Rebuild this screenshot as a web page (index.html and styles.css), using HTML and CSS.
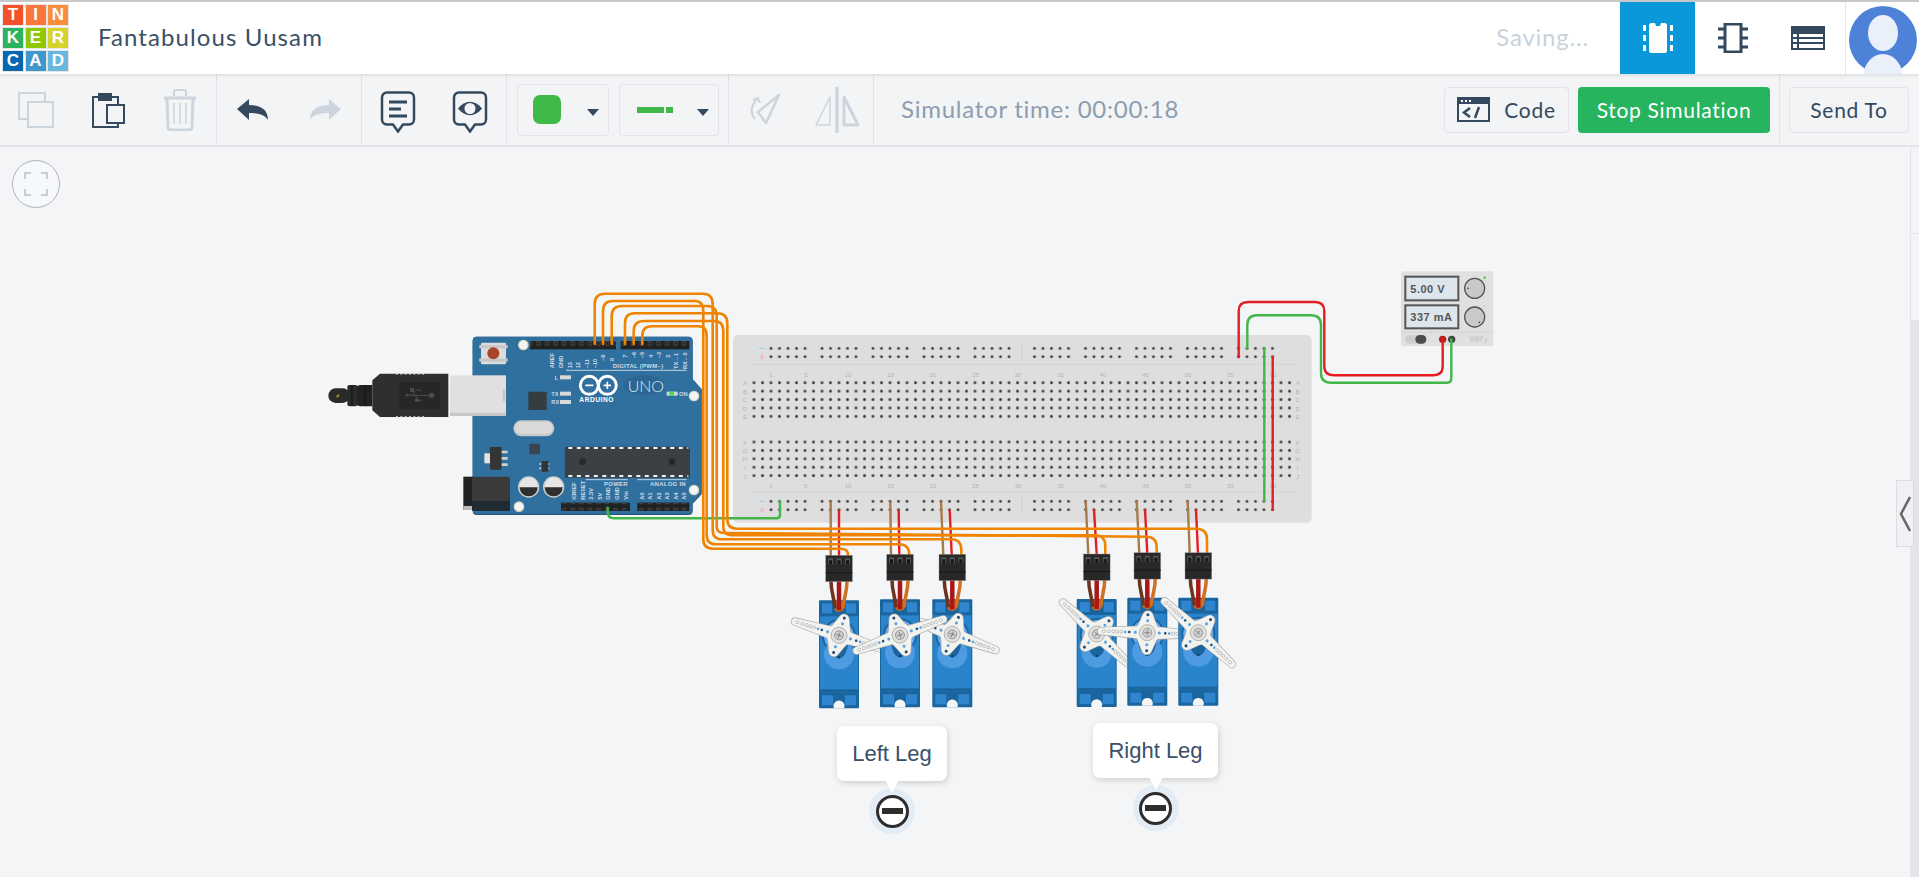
FILE: index.html
```html
<!DOCTYPE html>
<html lang="en">
<head>
  <meta charset="UTF-8" />
  <title>Fantabulous Uusam - Tinkercad</title>
  <link rel="stylesheet" href="styles.css">
</head>
<body>

  <header class="topbar">
    <div class="logo">
      <span class="c1">T</span><span class="c2">I</span><span class="c3">N</span>
      <span class="c4">K</span><span class="c5">E</span><span class="c6">R</span>
      <span class="c7">C</span><span class="c8">A</span><span class="c9">D</span>
    </div>
    <div class="title">Fantabulous Uusam</div>
    <div class="saving">Saving...</div>
    <nav class="tabs">
      <a class="tab active">
        <svg width="30" height="30" viewBox="0 0 30 30">
          <rect x="6" y="0" width="18" height="30" rx="2.5" fill="#fff"/>
          <path d="M12 0h6l-1 3h-4z" fill="#0b98da"/>
          <path d="M1.5 2v6M1.5 12v6M1.5 22v6M28.5 2v6M28.5 12v6M28.5 22v6" stroke="#fff" stroke-width="3"/>
        </svg>
      </a>
      <a class="tab">
        <svg width="30" height="30" viewBox="0 0 30 30">
          <rect x="7" y="1" width="16" height="28" fill="none" stroke="#34495e" stroke-width="3"/>
          <path d="M0 6h6M0 15h6M0 24h6M24 6h6M24 15h6M24 24h6" stroke="#34495e" stroke-width="3"/>
        </svg>
      </a>
      <a class="tab">
        <svg width="34" height="24" viewBox="0 0 34 24">
          <rect width="34" height="24" fill="#34495e"/>
          <path d="M8 8h24v3H8zM2 8h4v3H2zM2 13h4v3H2zM8 13h24v3H8zM2 18h4v4H2zM8 18h24v4H8z" fill="#fff"/>
        </svg>
      </a>
    </nav>
    <div class="avatar">
      <svg width="68" height="68" viewBox="0 0 68 68">
        <circle cx="34" cy="34" r="34" fill="#4d82d8"/>
        <ellipse cx="34" cy="27" rx="15" ry="18" fill="#e9f0fa"/>
        <ellipse cx="34" cy="72" rx="20" ry="24" fill="#e9f0fa"/>
      </svg>
    </div>
  </header>

  <div class="toolbar">
    <div class="group">
      <button class="tool">
        <svg width="36" height="36" viewBox="0 0 36 36" fill="none" stroke="#ccd5de" stroke-width="2">
          <rect x="1" y="1" width="26" height="26"/>
          <rect x="10" y="10" width="25" height="25" fill="#f3f4f6"/>
        </svg>
      </button>
      <button class="tool">
        <svg width="33" height="36" viewBox="0 0 33 36" fill="none" stroke="#34495e" stroke-width="2">
          <rect x="1" y="5" width="25" height="30"/>
          <rect x="7" y="2" width="12" height="6" fill="#34495e"/>
          <rect x="15" y="13" width="17" height="18" fill="#f3f4f6"/>
        </svg>
      </button>
      <button class="tool">
        <svg width="32" height="42" viewBox="0 0 32 42" fill="none" stroke="#ccd5de">
          <path d="M0 9h32" stroke-width="3"/>
          <path d="M10 7V3a2 2 0 0 1 2-2h8a2 2 0 0 1 2 2v4" stroke-width="2"/>
          <path d="M3 10l1 28a3 3 0 0 0 3 3h18a3 3 0 0 0 3-3l1-28" stroke-width="3"/>
          <path d="M10 14v21M16 14v21M22 14v21" stroke-width="1.5"/>
        </svg>
      </button>
    </div>
    <div class="group">
      <button class="tool">
        <svg width="32" height="21" viewBox="0 0 32 21"><path d="M0 10L12 0v6c12 0 19 5 19 15-3-5-9-7-19-7v7z" fill="#34495e"/></svg>
      </button>
      <button class="tool">
        <svg width="32" height="21" viewBox="0 0 32 21"><path d="M32 10L20 0v6C8 6 1 11 1 21c3-5 9-7 19-7v7z" fill="#ccd5de"/></svg>
      </button>
    </div>
    <div class="group">
      <button class="tool tool-low">
        <svg width="36" height="42" viewBox="0 0 36 42" fill="none" stroke="#34495e" stroke-width="2.5">
          <path d="M7 1.500h22a5 5 0 0 1 5 5v22a5 5 0 0 1-5 5h-6l-5 7-5-7H7a5 5 0 0 1-5-5v-22a5 5 0 0 1 5-5z"/>
          <path d="M9 11h18M9 18h12M9 25h18" stroke-width="3"/>
        </svg>
      </button>
      <button class="tool tool-low">
        <svg width="36" height="42" viewBox="0 0 36 42" fill="none" stroke="#34495e" stroke-width="2.5">
          <path d="M7 1.500h22a5 5 0 0 1 5 5v22a5 5 0 0 1-5 5h-6l-5 7-5-7H7a5 5 0 0 1-5-5v-22a5 5 0 0 1 5-5z"/>
          <path d="M6 17.500c7-9 17-9 24 0-7 9-17 9-24 0z" fill="#34495e" stroke="none"/>
          <circle cx="18" cy="17.500" r="5.500" fill="#f3f4f6" stroke="none"/>
        </svg>
      </button>
    </div>
    <div class="group pickers">
      <button class="picker picker-color">
        <span class="swatch"></span>
        <span class="caret"></span>
      </button>
      <button class="picker picker-line">
        <span class="line-long"></span><span class="line-short"></span>
        <span class="caret"></span>
      </button>
    </div>
    <div class="group">
      <button class="tool">
        <svg width="31" height="31" viewBox="0 0 31 31" fill="none" stroke="#ccd5de" stroke-width="2.500" stroke-linejoin="round">
          <path d="M29 1L8 18l8 11z"/>
          <path d="M5 25C0 19 1 12 7 5" stroke-width="2"/>
          <path d="M3 6l5-2 2 5" stroke-width="2"/>
        </svg>
      </button>
      <button class="tool">
        <svg width="46" height="46" viewBox="0 0 46 46" fill="none" stroke="#ccd5de" stroke-linejoin="round">
          <path d="M23 1v44" stroke-width="3.500" stroke-linecap="round"/>
          <path d="M16 10v28H2z" stroke-width="1.500"/>
          <path d="M30 10v28h14z" stroke-width="3"/>
        </svg>
      </button>
    </div>
    <div class="sim-time">Simulator time: 00:00:18</div>
    <div class="actions">
      <button class="btn btn-code">
        <svg width="33" height="25" viewBox="0 0 33 25">
          <rect x="1" y="1" width="31" height="23" fill="none" stroke="#34495e" stroke-width="2"/>
          <rect x="1" y="1" width="31" height="6" fill="#34495e"/>
          <path d="M4 4h2M8 4h2M12 4h2" stroke="#fff" stroke-width="2"/>
          <path d="M13 11l-6 4.500 6 4.500M22 10l-4 11" fill="none" stroke="#34495e" stroke-width="2.500"/>
        </svg>
        Code
      </button>
      <button class="btn btn-stop">Stop Simulation</button>
      <span class="divider"></span>
      <button class="btn btn-send">Send To</button>
    </div>
  </div>

  <div class="workspace">
    <main class="stage">
      <button class="fit">
        <svg width="24" height="24" viewBox="0 0 24 24" fill="none" stroke="#b9bec4" stroke-width="1.500">
          <path d="M1 7V1h6M17 1h6v6M23 17v6h-6M7 23H1v-6"/>
        </svg>
      </button>

      <svg class="circuit" width="1910" height="731" viewBox="0 146 1910 731">
        <defs>
          <pattern id="holes" x="749.750" y="377.500" width="8.500" height="8.400" patternUnits="userSpaceOnUse">
            <circle cx="4.250" cy="4.200" r="2.100" fill="#cfcfcf"/>
            <circle cx="4.250" cy="4.200" r="1.400" fill="#3c3c3c"/>
          </pattern>
          <pattern id="holes2" x="749.750" y="436.800" width="8.500" height="8.400" patternUnits="userSpaceOnUse">
            <circle cx="4.250" cy="4.200" r="2.100" fill="#cfcfcf"/>
            <circle cx="4.250" cy="4.200" r="1.400" fill="#3c3c3c"/>
          </pattern>
          <pattern id="rail" x="766.750" y="343.100" width="51" height="8.400" patternUnits="userSpaceOnUse">
            <g fill="#3c3c3c">
              <circle cx="4.250" cy="4.200" r="1.400"/><circle cx="12.750" cy="4.200" r="1.400"/><circle cx="21.250" cy="4.200" r="1.400"/><circle cx="29.750" cy="4.200" r="1.400"/><circle cx="38.250" cy="4.200" r="1.400"/>
            </g>
          </pattern>
          <pattern id="rail2" x="1030.250" y="343.100" width="51" height="8.400" patternUnits="userSpaceOnUse">
            <g fill="#3c3c3c">
              <circle cx="4.250" cy="4.200" r="1.400"/><circle cx="12.750" cy="4.200" r="1.400"/><circle cx="21.250" cy="4.200" r="1.400"/><circle cx="29.750" cy="4.200" r="1.400"/><circle cx="38.250" cy="4.200" r="1.400"/>
            </g>
          </pattern>
          <pattern id="pins" x="0" y="0" width="25.700" height="25" patternUnits="userSpaceOnUse">
            <rect x="7" y="6" width="12" height="13" fill="#4b4b4b"/>
            <rect x="10" y="9" width="6" height="7" fill="#1c1c1c"/>
          </pattern>

          <g id="bbnums" class="bb-label" text-anchor="middle">
            <text x="771">1</text><text x="805.700">5</text><text x="848">10</text><text x="890.500">15</text><text x="933">20</text><text x="975.500">25</text><text x="1018">30</text><text x="1060.500">35</text><text x="1103">40</text><text x="1145.500">45</text><text x="1188">50</text><text x="1230.700">55</text><text x="1273">60</text>
          </g>
          <g id="bbletters" class="bb-label" text-anchor="middle">
            <text y="384">A</text><text y="392.500">B</text><text y="401">C</text><text y="409.500">D</text><text y="418">E</text>
            <text y="443.500">F</text><text y="452">G</text><text y="460.300">H</text><text y="469">I</text><text y="477.500">J</text>
          </g>

          <g id="servo">
            <path d="M1 0h38a1 1 0 0 1 1 1v106a1 1 0 0 1-1 1H1a1 1 0 0 1-1-1V1a1 1 0 0 1 1-1z" fill="#1b659f"/>
            <rect x="1" y="16" width="38" height="76" fill="#2a84cc"/>
            <rect x="3" y="3" width="10" height="10" fill="#2f86cf"/>
            <rect x="27" y="3" width="10" height="10" fill="#2f86cf"/>
            <rect x="3" y="95" width="11" height="10" fill="#2f86cf"/>
            <rect x="26" y="95" width="11" height="10" fill="#2f86cf"/>
            <path d="M4 20h32v8L36 20z" fill="#1b659f"/>
            <circle cx="20" cy="36" r="17" fill="#1b659f"/>
            <circle cx="20" cy="36" r="15" fill="#66aef0"/>
            <circle cx="20" cy="54" r="15" fill="#4f9be2"/>
            <path d="M11 42a9 16 0 0 0 18 0z" fill="#1b659f"/>
            <circle cx="20" cy="57" r="1.200" fill="#0e3f66"/>
            <rect x="1" y="89" width="38" height="3" fill="#1b659f"/>
            <path d="M15 108a5.500 5.500 0 1 1 10 0z" fill="#f4f5f7"/>
            <circle cx="20" cy="6" r="5.500" fill="#c96d1e"/>
          </g>

          <g id="lead">
            <path d="M12 -19C12 -8 15 -4 16 8" fill="none" stroke="#6b3420" stroke-width="3.500"/>
            <path d="M28 -19C28 -8 25 -4 24 8" fill="none" stroke="#d07022" stroke-width="3.500"/>
            <path d="M20 -19V10" stroke="#aa1717" stroke-width="4.500"/>
            <rect x="6.700" y="-45" width="26.700" height="26.400" fill="#282828" stroke="#9a9a9a" stroke-width=".4"/>
            <rect x="6.700" y="-28" width="26.700" height="1" fill="#161616"/>
            <g fill="#555">
              <rect x="9" y="-42" width="5" height="6"/><rect x="17.500" y="-42" width="5" height="6"/><rect x="26" y="-42" width="5" height="6"/>
            </g>
            <g fill="#161616">
              <rect x="10" y="-40" width="3" height="4"/><rect x="18.500" y="-40" width="3" height="4"/><rect x="27" y="-40" width="3" height="4"/>
            </g>
          </g>

          <g id="arm">
            <g fill="#a6a6a6" stroke="#a6a6a6" stroke-width="1.200" stroke-linejoin="round">
              <path d="M-46 -3.500L-10 -6H10L46 -3.500A3.500 3.500 0 0 1 46 3.500L10 6H-10L-46 3.500A3.500 3.500 0 0 1 -46 -3.500Z"/>
              <path d="M-4.500 -19A5 5 0 0 1 4.500 -19L9 -8V8L4.500 19A5 5 0 0 1 -4.500 19L-9 8V-8Z"/>
              <circle r="12"/>
            </g>
            <g fill="#f2f2ef">
              <path d="M-46 -3.500L-10 -6H10L46 -3.500A3.500 3.500 0 0 1 46 3.500L10 6H-10L-46 3.500A3.500 3.500 0 0 1 -46 -3.500Z"/>
              <path d="M-4.500 -19A5 5 0 0 1 4.500 -19L9 -8V8L4.500 19A5 5 0 0 1 -4.500 19L-9 8V-8Z"/>
              <circle r="12"/>
            </g>
            <g fill="#5c9fdc">
              <circle cx="-12" r="1.500"/><circle cx="12" r="1.500"/><circle cx="-22" r="1.300"/><circle cx="22" r="1.300"/><circle cy="-12" r="1.500"/><circle cy="12" r="1.500"/>
            </g>
            <g fill="#234a72">
              <circle cx="-18" r="1.300"/><circle cx="18" r="1.300"/><circle cy="-18" r="1.500"/><circle cy="18" r="1.500"/>
            </g>
            <g fill="#f8f8f8" stroke="#9c9c9c" stroke-width=".6">
              <circle cx="-26" r="1.500"/><circle cx="-30" r="1.500"/><circle cx="-34" r="1.500"/><circle cx="-38.500" r="1.500"/><circle cx="-43.500" r="1.500"/>
              <circle cx="26" r="1.500"/><circle cx="30" r="1.500"/><circle cx="34" r="1.500"/><circle cx="38.500" r="1.500"/><circle cx="43.500" r="1.500"/>
            </g>
            <circle r="8" fill="#e2e2e0" stroke="#a8a8a8" stroke-width=".8"/>
            <circle r="4.500" fill="#d0d0d0" stroke="#8c8c8c" stroke-width=".8"/>
            <path d="M-3 0H3M0 -3V3" stroke="#777" stroke-width=".8"/>
          </g>
        </defs>

        <!-- breadboard -->
        <rect x="733" y="334" width="578.700" height="187.700" rx="5" fill="#dedede"/>
        <path d="M748 363.500H1297M748 490.700H1297" stroke="#d5d5d5"/>
        <path d="M1022 343V360M1022 493V510" stroke="#d0d0d0"/>
        <rect x="749.750" y="377.500" width="544" height="42" fill="url(#holes)"/>
        <rect x="749.750" y="436.800" width="544" height="42" fill="url(#holes2)"/>
        <rect x="766.750" y="343.100" width="250" height="16.800" fill="url(#rail)"/>
        <rect x="1030.250" y="343.100" width="250" height="16.800" fill="url(#rail2)"/>
        <g transform="translate(0 153)">
          <rect x="766.750" y="343.100" width="250" height="16.800" fill="url(#rail)"/>
          <rect x="1030.250" y="343.100" width="250" height="16.800" fill="url(#rail2)"/>
        </g>
        <use href="#bbnums" y="375.500"/>
        <use href="#bbnums" y="486.500"/>
        <use href="#bbletters" x="745"/>
        <use href="#bbletters" x="1297.700"/>
        <path d="M759 347.300h6M759 500.300h6" stroke="#a9cfe8" stroke-width="1.200"/>
        <path d="M759 356h6M762 353v6M759 509h6M762 506v6" stroke="#f0b3b3" stroke-width="1.200"/>

        <!-- arduino, coordinates from a 3x drawing -->
        <g transform="translate(320 280) scale(.33333)">
          <circle cx="490" cy="272" r="17" fill="#cfd3d6"/>
          <circle cx="490" cy="416" r="17" fill="#cfd3d6"/>
          <path d="M470 167H1105Q1118 167 1118 180V295L1145 325V640L1118 668V690Q1118 702 1105 702H470Q458 702 458 690V180Q458 167 470 167Z" fill="#25587f"/>
          <path d="M470 167H1105Q1118 167 1118 180V295L1145 325V636L1118 664V686Q1118 698 1105 698H470Q458 698 458 686V180Q458 167 470 167Z" fill="#30709f"/>

          <g fill="#f4f5f7" stroke="#d8d8b8" stroke-width="4">
            <circle cx="610" cy="192" r="14"/><circle cx="1122" cy="345" r="14"/><circle cx="1122" cy="627" r="14"/><circle cx="597" cy="677" r="14"/>
          </g>

          <rect x="483" y="185" width="75" height="65" rx="4" fill="#dcdcdc"/>
          <rect x="478" y="192" width="85" height="10" fill="#c8c8c8"/>
          <rect x="478" y="232" width="85" height="10" fill="#c8c8c8"/>
          <circle cx="520" cy="217" r="18" fill="#a8442c"/>

          <!-- headers -->
          <rect x="630" y="180" width="258" height="25" fill="#222"/>
          <rect x="902" y="180" width="206" height="25" fill="#222"/>
          <rect x="723" y="665" width="207" height="25" fill="#222"/>
          <rect x="952" y="665" width="156" height="25" fill="#222"/>
          <rect x="630" y="180" width="258" height="25" fill="url(#pins)"/>
          <rect x="902" y="180" width="206" height="25" fill="url(#pins)"/>
          <rect x="723" y="665" width="207" height="25" fill="url(#pins)"/>
          <rect x="952" y="665" width="156" height="25" fill="url(#pins)"/>

          <!-- silk screen -->
          <g class="silk">
            <text transform="translate(703 262) rotate(-90)">AREF</text>
            <text transform="translate(729 262) rotate(-90)">GND</text>
            <text transform="translate(755 262) rotate(-90)">13</text>
            <text transform="translate(780 262) rotate(-90)">12</text>
            <text transform="translate(806 262) rotate(-90)">~11</text>
            <text transform="translate(831 262) rotate(-90)">~10</text>
            <text transform="translate(856 240) rotate(-90)">~9</text>
            <text transform="translate(882 240) rotate(-90)">8</text>
            <text transform="translate(921 230) rotate(-90)">7</text>
            <text transform="translate(947 232) rotate(-90)">~6</text>
            <text transform="translate(973 232) rotate(-90)">~5</text>
            <text transform="translate(999 230) rotate(-90)">4</text>
            <text transform="translate(1024 232) rotate(-90)">~3</text>
            <text transform="translate(1049 230) rotate(-90)">2</text>
            <text transform="translate(1075 264) rotate(-90)">TX→1</text>
            <text transform="translate(1101 264) rotate(-90)">RX←0</text>
            <text x="878" y="261" class="silk-big">DIGITAL (PWM~)</text>
            <text x="852" y="616" class="silk-big">POWER</text>
            <text x="990" y="616" class="silk-big">ANALOG IN</text>
            <text transform="translate(769 656) rotate(-90)">IOREF</text>
            <text transform="translate(795 656) rotate(-90)">RESET</text>
            <text transform="translate(820 656) rotate(-90)">3.3V</text>
            <text transform="translate(845 656) rotate(-90)">5V</text>
            <text transform="translate(871 656) rotate(-90)">GND</text>
            <text transform="translate(897 656) rotate(-90)">GND</text>
            <text transform="translate(923 656) rotate(-90)">Vin</text>
            <text transform="translate(971 656) rotate(-90)">A0</text>
            <text transform="translate(997 656) rotate(-90)">A1</text>
            <text transform="translate(1022 656) rotate(-90)">A2</text>
            <text transform="translate(1048 656) rotate(-90)">A3</text>
            <text transform="translate(1074 656) rotate(-90)">A4</text>
            <text transform="translate(1099 656) rotate(-90)">A5</text>
            <text x="704" y="296">L</text>
            <text x="694" y="344">TX</text>
            <text x="694" y="369">RX</text>
            <text x="1077" y="344">ON</text>
          </g>
          <path d="M738 268H1100M797 596H923M952 596H1100" stroke="#dfe8ef" stroke-width="2.500"/>

          <!-- leds -->
          <g fill="#d8d8d8">
            <rect x="720" y="283" width="33" height="12"/><rect x="720" y="332" width="33" height="12"/><rect x="720" y="357" width="33" height="12"/>
          </g>
          <rect x="1040" y="332" width="33" height="12" fill="#d8d8d8"/>
          <rect x="1048" y="332" width="14" height="12" fill="#41e04a"/>

          <!-- logo -->
          <ellipse cx="970" cy="313" rx="60" ry="30" fill="#2b6694"/>
          <g fill="none" stroke="#fff" stroke-width="9">
            <circle cx="808" cy="313" r="27"/><circle cx="862" cy="313" r="27"/>
          </g>
          <path d="M796 313H820M851 313H873M862 302V324" stroke="#fff" stroke-width="5"/>
          <text x="778" y="362" class="arduino-word">ARDUINO</text>
          <text x="923" y="332" class="uno-word">UNO</text>

          <!-- parts -->
          <rect x="625" y="332" width="55" height="55" rx="2" fill="#353c42"/>
          <rect x="580" y="418" width="123" height="48" rx="24" fill="#c8c8c8"/>
          <rect x="585" y="422" width="113" height="36" rx="18" fill="#dadada"/>
          <rect x="628" y="488" width="32" height="32" rx="2" fill="#39444c"/>
          <rect x="493" y="517" width="20" height="30" fill="#e2e2e2"/>
          <rect x="510" y="498" width="35" height="68" rx="2" fill="#353535"/>
          <path d="M545 513h18M545 532h18M545 551h18" stroke="#cfcfcf" stroke-width="8"/>
          <path d="M658 549h34M658 562h34" stroke="#cfcfcf" stroke-width="5" stroke-dasharray="6 6"/>
          <rect x="665" y="540" width="20" height="32" fill="#2e3438"/>
          <rect x="430" y="587" width="30" height="100" fill="#232323"/>
          <rect x="430" y="675" width="30" height="12" fill="#bbb"/>
          <rect x="456" y="587" width="114" height="85" rx="8" fill="#3a3a3a"/>
          <rect x="456" y="660" width="114" height="30" rx="4" fill="#1f2a33"/>
          <g>
            <circle cx="626" cy="618" r="32" fill="#cdcdcd"/>
            <circle cx="626" cy="616" r="27" fill="#e6e6e6"/>
            <path d="M599 619a27 27 0 0 0 54 0z" fill="#2f2f2f"/>
            <circle cx="701" cy="618" r="32" fill="#cdcdcd"/>
            <circle cx="701" cy="616" r="27" fill="#e6e6e6"/>
            <path d="M674 619a27 27 0 0 0 54 0z" fill="#2f2f2f"/>
          </g>
          <rect x="735" y="497" width="375" height="93" rx="3" fill="#3b4044"/>
          <path d="M745 501H1105M745 585H1105" stroke="#f0f0f0" stroke-width="6" stroke-dasharray="12 13.500"/>
          <circle cx="788" cy="542" r="10" fill="#23282b"/>
          <circle cx="1056" cy="542" r="10" fill="#23282b"/>

          <!-- usb -->
          <rect x="390" y="283" width="168" height="122" fill="#e0e0e0"/>
          <rect x="390" y="395" width="168" height="10" fill="#c6c6c6"/>
          <rect x="548" y="325" width="8" height="36" fill="#c6c6c6"/>
          <path d="M385 278H180L157 298V388L180 408H385Z" fill="#2f2f2f"/>
          <path d="M228 278H320M228 408H320" stroke="#dedede" stroke-width="5" stroke-dasharray="6 7"/>
          <rect x="238" y="303" width="122" height="80" fill="#272727"/>
          <g stroke="#4c4c4c" stroke-width="3" fill="none">
            <path d="M255 343H335M275 343L290 327H305M285 343L295 358H305"/>
          </g>
          <g fill="#4c4c4c">
            <circle cx="335" cy="343" r="8"/><rect x="270" y="321" width="12" height="12"/><circle cx="290" cy="358" r="6"/><path d="M255 343l10-6v12z"/>
          </g>
          <path d="M157 312H120L108 316V372L120 376H157Z" fill="#222"/>
          <rect x="82" y="312" width="30" height="64" rx="6" fill="#2b2b2b"/>
          <path d="M96 314V374M135 316V372" stroke="#191919" stroke-width="5"/>
          <rect x="25" y="322" width="65" height="44" rx="22" fill="#2b2b2b"/>
          <path d="M58 338L48 346H54L46 352L60 344H54Z" fill="#f2d40d"/>
        </g>

        <!-- power supply, coordinates from a 3x drawing -->
        <g transform="translate(1200 260) scale(.33333)">
          <rect x="603" y="31" width="277" height="224" rx="5" fill="#e0e0e0"/>
          <path d="M603 214H880" stroke="#d2d2d2" stroke-width="2"/>
          <rect x="616" y="47" width="159" height="71" fill="#dde6ec" stroke="#555" stroke-width="6"/>
          <rect x="616" y="133" width="159" height="69" fill="#dde6ec" stroke="#555" stroke-width="6"/>
          <text x="631" y="96" class="ps-text">5.00 V</text>
          <text x="631" y="180" class="ps-text">337 mA</text>
          <circle cx="824" cy="82" r="30" fill="#c9c9c9" stroke="#555" stroke-width="4"/>
          <circle cx="824" cy="168" r="30" fill="#c9c9c9" stroke="#555" stroke-width="4"/>
          <circle cx="804" cy="82" r="2.500" fill="#444"/>
          <circle cx="838" cy="184" r="2.500" fill="#444"/>
          <circle cx="854" cy="50" r="4" fill="#41e04a"/>
          <circle cx="854" cy="135" r="4" fill="#cfcfcf"/>
          <rect x="615" y="222" width="65" height="26" rx="13" fill="#cecece"/>
          <rect x="646" y="222" width="33" height="26" rx="13" fill="#4c4c4c"/>
          <text x="627" y="240" class="ps-tiny">ON</text>
          <text x="808" y="233" class="ps-tiny">VOLTAGE</text>
          <text x="810" y="243" class="ps-tiny">SUPPLY</text>
          <path d="M862 228L852 240H857L852 250L864 236H858Z" fill="#c9c9c9"/>
          <circle cx="728" cy="235" r="11" fill="#b81c1c"/>
          <circle cx="755" cy="235" r="11" fill="#444"/>
        </g>

        <!-- board jumpers -->
        <g class="wire">
          <path class="green" d="M607.700 506.700V511Q607.700 517.300 614 517.300H776.500Q780 517.300 780 514V500.300"/>
          <path class="green" d="M1264.300 347.300V500"/>
          <path class="red" d="M1272.700 356V508.300"/>
          <path class="red" d="M1238.700 356V310Q1238.700 301 1248 301H1315Q1324.300 301 1324.300 310V365Q1324.300 374.300 1334 374.300H1433Q1442.700 374.300 1442.700 365V338.300"/>
          <path class="green" d="M1247.300 347.300V324Q1247.300 314.300 1257 314.300H1311Q1321 314.300 1321 324V372Q1321 381.700 1331 381.700H1447Q1451.300 381.700 1451.300 377V338.300"/>
        </g>

        <!-- leads into the board -->
        <g class="leads">
          <path d="M830.700 500.300V555"/>
          <path d="M890.300 500.300L891 554"/>
          <path d="M941 500.300L943.300 554"/>
          <path d="M1085.700 500L1088.300 553"/>
          <path d="M1136.700 500L1139.300 552.700"/>
          <path d="M1187.700 500L1189.700 552.700"/>
        </g>
        <g class="leads-red">
          <path d="M839 509V555"/>
          <path d="M898.700 509L899.300 554"/>
          <path d="M949.700 509L951.700 554"/>
          <path d="M1094 508.300L1096.700 553"/>
          <path d="M1145 508.300L1147.300 552.700"/>
          <path d="M1196 508.300L1198 552.700"/>
        </g>

        <!-- signal wires -->
        <g class="wire orange">
          <path d="M603 343V310Q603 300 613 300H695Q703.300 300 703.300 310V538Q703.300 547.700 713 547.700H841Q848 547.700 848 554"/>
          <path d="M642.300 343V335Q642.300 325.300 652 325.300H698Q706.700 325.300 706.700 335V534Q706.700 543.300 716 543.300H899Q909.300 543.300 909.300 554"/>
          <path d="M594.700 343V303Q594.700 292.700 605 292.700H703Q712.700 292.700 712.700 303V529Q712.700 538.300 722 538.300H951Q961.300 538.300 961.300 549V553"/>
          <path d="M611.700 343V315Q611.700 305 622 305H707Q716.700 305 716.700 315V526Q716.700 532 724 532L1146 535.700Q1156.700 535.700 1156.700 546V552"/>
          <path d="M633.700 343V330Q633.700 320 644 320H714Q723.300 320 723.300 330V526Q723.300 534.300 732 534.300H1095Q1105.300 534.300 1105.300 545V553"/>
          <path d="M625 343V322Q625 312.300 635 312.300H717Q727.300 312.300 727.300 322V518Q727.300 527.700 737 527.700H1196Q1207 527.700 1207 538V552"/>
        </g>

        <!-- servos, left group -->
        <g>
          <use href="#servo" x="819" y="599.300"/>
          <use href="#lead" x="819" y="599.300"/>
          <use href="#arm" transform="translate(839 634.300) rotate(17.400)"/>
        </g>
        <g>
          <use href="#servo" x="932.300" y="598.300"/>
          <use href="#lead" x="932.300" y="598.300"/>
          <use href="#arm" transform="translate(952.300 633.300) rotate(20)"/>
        </g>
        <g>
          <use href="#servo" x="880" y="598.300"/>
          <use href="#lead" x="880" y="598.300"/>
          <use href="#arm" transform="translate(900 634) rotate(-20)"/>
        </g>
        <!-- servos, right group -->
        <g>
          <use href="#servo" x="1076.700" y="598"/>
          <use href="#lead" x="1076.700" y="598"/>
          <use href="#arm" transform="translate(1096.700 633) rotate(43)"/>
        </g>
        <g>
          <use href="#servo" x="1127.300" y="596.700"/>
          <use href="#lead" x="1127.300" y="596.700"/>
          <use href="#arm" transform="translate(1147.300 631.700) rotate(2)"/>
        </g>
        <g>
          <use href="#servo" x="1178.300" y="596.700"/>
          <use href="#lead" x="1178.300" y="596.700"/>
          <use href="#arm" transform="translate(1198.300 631.700) rotate(43)"/>
        </g>
      </svg>

      <div class="note note-left">
        <div class="note-box">Left Leg</div>
        <div class="note-pin"><span class="minus"></span></div>
      </div>
      <div class="note note-right">
        <div class="note-box">Right Leg</div>
        <div class="note-pin"><span class="minus"></span></div>
      </div>

      <button class="panel-toggle">
        <svg width="12" height="36" viewBox="0 0 12 36"><path d="M11 1L2 18l9 17" fill="none" stroke="#666" stroke-width="2.500"/></svg>
      </button>
    </main>
    <aside class="rail">
      <div class="rail-a"></div>
      <div class="rail-b"></div>
    </aside>
  </div>

</body>
</html>
```

FILE: styles.css
```css
* {
  box-sizing: border-box;
}
html, body {
  margin: 0;
  height: 100%;
  overflow: hidden;
}
body {
  background: #f4f5f7;
  color: #34495e;
  font-family: "Lato", "Noto Sans", sans-serif;
  display: flex;
  flex-direction: column;
}
button {
  font: inherit;
  color: inherit;
  background: none;
  border: none;
  padding: 0;
}

/* top bar */
.topbar {
  height: 74px;
  flex: none;
  background: #fff;
  border-top: 2px solid #c8c8c8;
  display: flex;
  align-items: stretch;
  position: relative;
  z-index: 2;
  box-shadow: 0 1px 4px rgba(0, 0, 0, 0.12);
}
.logo {
  width: 65px;
  height: 66px;
  margin: 3px 0 0 3px;
  display: grid;
  grid-template-columns: repeat(3, 20px);
  grid-template-rows: repeat(3, 20px);
  gap: 3px 2.5px;
}
.logo span {
  color: #fff;
  font: 700 17px "Liberation Sans", sans-serif;
  text-align: center;
  line-height: 20px;
  box-shadow: 0 0 0 1px rgba(190, 190, 190, 0.4);
}
.c1 { background: #f4502a; }
.c2 { background: #f9773b; }
.c3 { background: #f98f3d; }
.c4 { background: #2ab45f; }
.c5 { background: #90c800; }
.c6 { background: #d7d32c; }
.c7 { background: #0767b0; }
.c8 { background: #3f97cb; }
.c9 { background: #69b8de; }
.title {
  margin-left: 30px;
  align-self: center;
  font-size: 24px;
  letter-spacing: 1.1px;
  color: #3a4f66;
  padding-bottom: 4px;
}
.saving {
  margin-left: auto;
  align-self: center;
  font-size: 24px;
  letter-spacing: 0.8px;
  color: #c8d2dc;
  padding-bottom: 4px;
  margin-right: 31px;
}
.tabs {
  display: flex;
}
.tab {
  width: 75px;
  display: flex;
  align-items: center;
  justify-content: center;
}
.tab.active {
  background: #0b98da;
}
.avatar {
  width: 74px;
  border-left: 1px solid #e3e5e8;
  padding: 4px 0 0 3px;
  overflow: hidden;
}

/* toolbar */
.toolbar {
  height: 73px;
  flex: none;
  background: #f3f4f6;
  border-bottom: 2px solid #e3e5e8;
  display: flex;
  align-items: stretch;
}
.group {
  display: flex;
  border-right: 1px solid #e1e3e7;
}
.tool {
  width: 72px;
  display: flex;
  align-items: center;
  justify-content: center;
}
.tool-low {
  padding-top: 5px;
}
.pickers {
  align-items: center;
  gap: 10px;
  padding-left: 10px;
  width: 222px;
}
.picker {
  height: 52px;
  border: 1px solid #e2e4e8;
  border-radius: 4px;
  display: flex;
  align-items: center;
  position: relative;
}
.picker-color {
  width: 92px;
  padding-left: 15px;
}
.picker-line {
  width: 100px;
  padding-left: 17px;
  gap: 2px;
}
.swatch {
  width: 28px;
  height: 29px;
  border-radius: 7px;
  background: #3fb948;
}
.line-long {
  width: 27px;
  height: 6px;
  background: #3fb948;
}
.line-short {
  width: 7px;
  height: 6px;
  background: #3fb948;
}
.caret {
  position: absolute;
  right: 9px;
  top: 24px;
  border-style: solid;
  border-width: 7px 6px 0;
  border-color: #34495e transparent transparent;
}
.sim-time {
  margin-left: 27px;
  align-self: center;
  font-size: 24px;
  letter-spacing: 0.75px;
  color: #8c9db0;
  padding-bottom: 2px;
}
.actions {
  margin-left: auto;
  display: flex;
  align-items: center;
  gap: 9px;
  padding-right: 10px;
  align-self: stretch;
}
.btn {
  height: 46px;
  border-radius: 4px;
  font-size: 21px;
  letter-spacing: 0.7px;
  display: flex;
  align-items: center;
  justify-content: center;
}
.btn-code {
  width: 125px;
  gap: 14px;
  border: 1px solid #e1e3e7;
}
.btn-stop {
  width: 192px;
  background: #27b45e;
  color: #fff;
}
.btn-send {
  width: 120px;
  border: 1px solid #e1e3e7;
}
.divider {
  width: 1px;
  align-self: stretch;
  background: #e1e3e7;
}

/* workspace */
.workspace {
  flex: 1;
  display: flex;
  min-height: 0;
}
.stage {
  flex: 1;
  position: relative;
  background: #f4f5f7;
}
.circuit {
  position: absolute;
  left: 0;
  top: 0;
}
.fit {
  position: absolute;
  left: 12px;
  top: 13px;
  width: 48px;
  height: 48px;
  border-radius: 50%;
  border: 1px solid #b0b3b7;
  background: #f7f8f9;
  display: flex;
  align-items: center;
  justify-content: center;
  z-index: 1;
}
.rail {
  width: 9px;
  flex: none;
  display: flex;
  flex-direction: column;
  border-left: 1px solid #e3e5e8;
  background: #e3e5ea;
}
.rail-a {
  height: 87px;
  background: #f3f4f6;
  border-bottom: 1px solid #e3e5e8;
}
.rail-b {
  height: 86px;
  background: #f3f4f6;
}
.panel-toggle {
  position: absolute;
  left: 1896px;
  top: 333px;
  width: 18px;
  height: 67px;
  background: #f1f1f3;
  border: 1px solid #dcdde0;
  display: flex;
  align-items: center;
  justify-content: center;
}

/* circuit details */
.bb-label {
  font: 6px "Liberation Sans", sans-serif;
  fill: #b4b4b4;
}
.silk {
  font: 700 17px "Liberation Sans", sans-serif;
  fill: #cddbe7;
}
.silk-big {
  font: 700 18px "Liberation Sans", sans-serif;
  letter-spacing: 0.8px;
}
.arduino-word {
  font: 700 20px "Liberation Sans", sans-serif;
  letter-spacing: 1.5px;
  fill: #fff;
}
.uno-word {
  font: 300 48px "Lato", sans-serif;
  fill: #dfe8ef;
}
.ps-text {
  font: 700 33px "Liberation Sans", sans-serif;
  letter-spacing: 1.5px;
  fill: #555;
}
.ps-tiny {
  font: 700 9px "Liberation Sans", sans-serif;
  fill: #c4c4c4;
}
.wire path {
  fill: none;
  stroke-width: 2.4;
  stroke-linecap: round;
}
.wire .green {
  stroke: #43b649;
}
.wire .red {
  stroke: #e41e20;
}
.orange path {
  stroke: #f08300;
  stroke-width: 2.6;
}
.leads path {
  stroke: #a87b4a;
  stroke-width: 2.4;
}
.leads-red path {
  stroke: #e41e20;
  stroke-width: 2.4;
}

/* annotations */
.note {
  position: absolute;
  display: flex;
  flex-direction: column;
  align-items: center;
}
.note-left {
  left: 837px;
  top: 579px;
  width: 110px;
}
.note-right {
  left: 1093px;
  top: 576px;
  width: 125px;
}
.note-box {
  width: 100%;
  height: 55px;
  background: #fff;
  border-radius: 7px;
  box-shadow: 1px 2px 6px rgba(0, 0, 0, 0.16);
  font: 22px "Liberation Sans", sans-serif;
  color: #3a5068;
  display: flex;
  align-items: center;
  justify-content: center;
  position: relative;
}
.note-box::after {
  content: "";
  position: absolute;
  left: 50%;
  bottom: -12px;
  margin-left: -7px;
  border-style: solid;
  border-width: 13px 7px 0;
  border-color: #fff transparent transparent;
}
.note-pin {
  margin-top: 7px;
  width: 46px;
  height: 46px;
  border-radius: 50%;
  background: #e3ebf4;
  display: flex;
  align-items: center;
  justify-content: center;
}
.minus {
  width: 33px;
  height: 33px;
  border-radius: 50%;
  border: 3px solid #2e2e2e;
  background: #fff;
  display: flex;
  align-items: center;
  justify-content: center;
}
.minus::before {
  content: "";
  width: 21px;
  height: 6px;
  background: #2e2e2e;
}
```
